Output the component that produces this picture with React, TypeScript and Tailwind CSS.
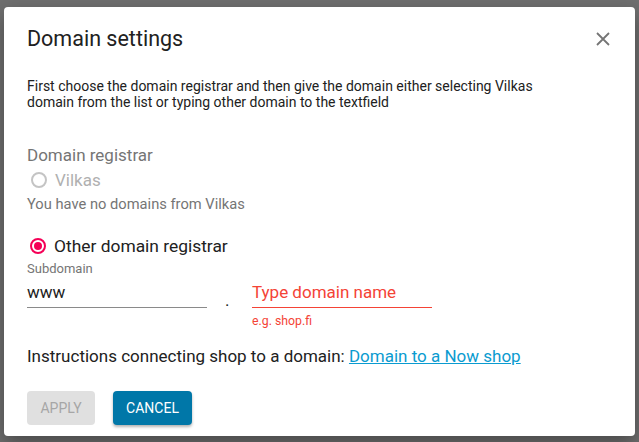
import React from "react";

function Radio({ checked, disabled }: { checked?: boolean; disabled?: boolean }) {
  return (
    <span
      className={`flex h-[16px] w-[16px] items-center justify-center rounded-full border-2 ${
        disabled ? "border-[#c4c4c4]" : checked ? "border-[#f50057]" : "border-[#757575]"
      }`}
    >
      {checked && <span className="h-[8px] w-[8px] rounded-full bg-[#f50057]" />}
    </span>
  );
}

export default function App() {
  return (
    <div
      className="flex h-[442px] w-[639px] items-start bg-[#6f6f6f] pl-[4px] pt-[7px]"
      style={{ fontFamily: "Roboto, 'Liberation Sans', sans-serif" }}
    >
      <div className="flex h-[429px] w-[631px] flex-col rounded-[4px] bg-white shadow-[0_8px_20px_rgba(0,0,0,0.35)]">
        {/* header */}
        <div className="flex items-center justify-between pl-[23px] pr-[20px] pt-[19px]">
          <h2 className="text-[21.5px] leading-[26px] text-[#212121]">Domain settings</h2>
          <button className="flex h-[24px] w-[24px] items-center justify-center text-[#757575]">
            <svg width="16" height="16" viewBox="0 0 16 16" fill="none" stroke="currentColor" strokeWidth="1.8">
              <path d="M2 2L14 14M14 2L2 14" />
            </svg>
          </button>
        </div>

        <div className="flex flex-col pl-[23px] pr-[24px]">
          <p className="mt-[26px] text-[14px] leading-[16px] text-[#212121]">
            First choose the domain registrar and then give the domain either selecting Vilkas
            <br />
            domain from the list or typing other domain to the textfield
          </p>

          <div className="mt-[35px] text-[17px] leading-[20px] text-[#757575]">Domain registrar</div>
          <label className="mt-[5px] flex items-center gap-[8px] pl-[4px]">
            <Radio disabled />
            <span className="text-[17px] leading-[20px] text-[#b0b0b0]">Vilkas</span>
          </label>
          <div className="mt-[5px] text-[14.7px] leading-[18px] text-[#757575]">You have no domains from Vilkas</div>

          <label className="mt-[23px] flex items-center gap-[8px] pl-[3px]">
            <Radio checked />
            <span className="text-[17.4px] leading-[20px] text-[#212121]">Other domain registrar</span>
          </label>

          <div className="mt-[6px] flex items-start">
            <div className="flex w-[180px] flex-col">
              <span className="text-[13px] leading-[14px] text-[#757575]">Subdomain</span>
              <span className="mt-[6px] border-b border-[#8a8a8a] pb-[5px] text-[17px] leading-[20px] text-[#212121]">www</span>
            </div>
            <span className="ml-[18px] mt-[28px] w-[27px] text-[17px] leading-[20px] text-[#212121]">.</span>
            <div className="flex w-[180px] flex-col pt-[20px]">
              <span className="border-b border-[#f44336] pb-[5px] text-[17px] leading-[20px] text-[#f44336]">Type domain name</span>
              <span className="mt-[6px] text-[12.3px] leading-[14px] text-[#f44336]">e.g. shop.fi</span>
            </div>
          </div>

          <p className="mt-[18px] text-[17px] leading-[20px] text-[#212121]">
            Instructions connecting shop to a domain:{" "}
            <a href="#" className="text-[#0a9bd0] underline">Domain to a Now shop</a>
          </p>

          <div className="mt-[25px] flex gap-[18px]">
            <button className="h-[34px] w-[68px] rounded-[4px] bg-[#e0e0e0] text-[14px] text-[#a6a6a6]">APPLY</button>
            <button className="h-[34px] w-[79px] rounded-[4px] bg-[#0077a8] text-[14px] text-white shadow-[0_2px_3px_rgba(0,0,0,0.3)]">CANCEL</button>
          </div>
        </div>
      </div>
    </div>
  );
}
